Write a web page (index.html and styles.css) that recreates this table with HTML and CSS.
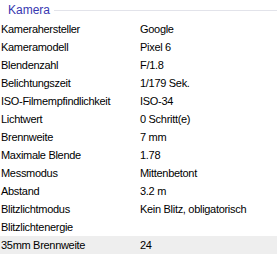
FILE: index.html
```html
<!DOCTYPE html>
<html lang="de">
<head>
    <meta charset="UTF-8">
    <title>Eigenschaften - Kamera</title>
    <link rel="stylesheet" href="styles.css">
</head>
<body>
    <div class="group">
        <div class="group-header">
            <span class="group-title">Kamera</span>
            <span class="group-line"></span>
        </div>

        <!-- Eigenschaften der Kamera -->
        <div class="prop-list">
            <div class="prop"><span class="name">Kamerahersteller</span><span class="value">Google</span></div>
            <div class="prop"><span class="name">Kameramodell</span><span class="value">Pixel 6</span></div>
            <div class="prop"><span class="name">Blendenzahl</span><span class="value">F/1.8</span></div>
            <div class="prop"><span class="name">Belichtungszeit</span><span class="value">1/179 Sek.</span></div>
            <div class="prop"><span class="name">ISO-Filmempfindlichkeit</span><span class="value">ISO-34</span></div>
            <div class="prop"><span class="name">Lichtwert</span><span class="value">0 Schritt(e)</span></div>
            <div class="prop"><span class="name">Brennweite</span><span class="value">7 mm</span></div>
            <div class="prop"><span class="name">Maximale Blende</span><span class="value">1.78</span></div>
            <div class="prop"><span class="name">Messmodus</span><span class="value">Mittenbetont</span></div>
            <div class="prop"><span class="name">Abstand</span><span class="value">3.2 m</span></div>
            <div class="prop"><span class="name">Blitzlichtmodus</span><span class="value">Kein Blitz, obligatorisch</span></div>
            <div class="prop"><span class="name">Blitzlichtenergie</span><span class="value"></span></div>
            <div class="prop selected"><span class="name">35mm Brennweite</span><span class="value">24</span></div>
        </div>
    </div>
</body>
</html>
```

FILE: styles.css
```css
body {
    margin: 0;
    background: #ffffff;
    font-family: "Liberation Sans", Arial, sans-serif;
    font-size: 11px;
    color: #000000;
}
.group-header {
    display: flex;
    align-items: center;
    height: 20px;
    padding-left: 8px;
}
.group-title {
    color: #3737b0;
    font-size: 12px;
    margin-right: 4px;
}
.group-line {
    flex: 1;
    height: 1px;
    background: #e2e3ea;
    margin-top: 1px;
}
.prop {
    display: flex;
    align-items: center;
    height: 18px;
    padding-left: 1px;
    letter-spacing: -0.3px;
}
.prop .name {
    width: 139px;
    white-space: nowrap;
}
.prop.selected {
    background: #eeeeee;
}
```
